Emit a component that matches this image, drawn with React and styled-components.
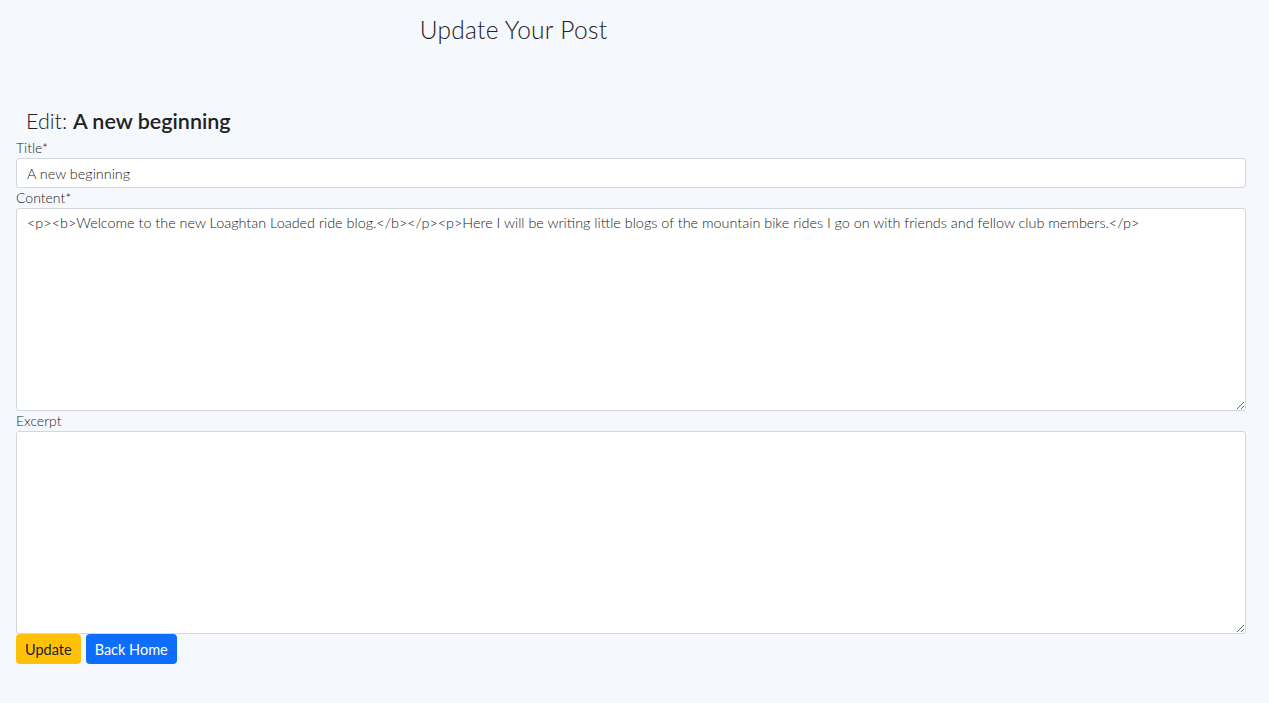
import React from "react";
import styled, { createGlobalStyle } from "styled-components";

const GlobalStyle = createGlobalStyle`
  html, body {
    margin: 0;
    padding: 0;
    background: #f5f8fc;
    color: #212529;
    font-family: Lato, "Noto Sans", sans-serif;
  }
  * { box-sizing: border-box; }
`;

const Page = styled.div`
  padding: 0 23px 0 16px;
  min-height: 703px;
`;

const Header = styled.h1`
  width: 995px;
  margin: 0;
  padding-top: 15px;
  height: 110px;
  text-align: center;
  font-size: 24.5px;
  font-weight: 300;
  letter-spacing: 0.3px;
  color: #222;
`;

const EditTitle = styled.h2`
  margin: 0 0 6px;
  padding-left: 10px;
  font-size: 21.5px;
  font-weight: 300;
  line-height: 22px;
  color: #222;

  strong {
    font-weight: 600;
  }
`;

const Form = styled.form`
  display: flex;
  flex-direction: column;
`;

const Label = styled.label`
  font-size: 14px;
  font-weight: 300;
  line-height: 20px;
  color: #1e1e1e;
`;

const Input = styled.input`
  height: 30px;
  padding: 0 10px;
  border: 1px solid #d3d7db;
  border-radius: 3px;
  background: #fff;
  font-family: inherit;
  font-size: 14.4px;
  font-weight: 300;
  color: #222;
  outline: none;
`;

const TextArea = styled.textarea`
  height: 203px;
  padding: 5px 10px;
  border: 1px solid #d3d7db;
  border-radius: 3px;
  background: #fff;
  font-family: inherit;
  font-size: 14.4px;
  font-weight: 300;
  color: #222;
  resize: vertical;
  outline: none;
  display: block;
`;

const Buttons = styled.div`
  display: flex;
  gap: 5px;
`;

const Button = styled.button`
  height: 30px;
  padding: 0 9px;
  border: none;
  border-radius: 4px;
  font-family: inherit;
  font-size: 14.5px;
  font-weight: 400;
  background: ${(p) => (p.$variant === "primary" ? "#0d6efd" : "#ffc107")};
  color: ${(p) => (p.$variant === "primary" ? "#fff" : "#222")};
  cursor: pointer;
`;

const content =
  "<p><b>Welcome to the new Loaghtan Loaded ride blog.</b></p><p>Here I will be writing little blogs of the mountain bike rides I go on with friends and fellow club members.</p>";

export default function App() {
  return (
    <>
      <GlobalStyle />
      <Page>
        <Header>Update Your Post</Header>
        <EditTitle>
          Edit: <strong>A new beginning</strong>
        </EditTitle>
        <Form onSubmit={(e) => e.preventDefault()}>
          <Label htmlFor="title">Title*</Label>
          <Input id="title" defaultValue="A new beginning" />
          <Label htmlFor="content">Content*</Label>
          <TextArea id="content" defaultValue={content} />
          <Label htmlFor="excerpt">Excerpt</Label>
          <TextArea id="excerpt" defaultValue="" />
          <Buttons>
            <Button type="submit">Update</Button>
            <Button type="button" $variant="primary">
              Back Home
            </Button>
          </Buttons>
        </Form>
      </Page>
    </>
  );
}
